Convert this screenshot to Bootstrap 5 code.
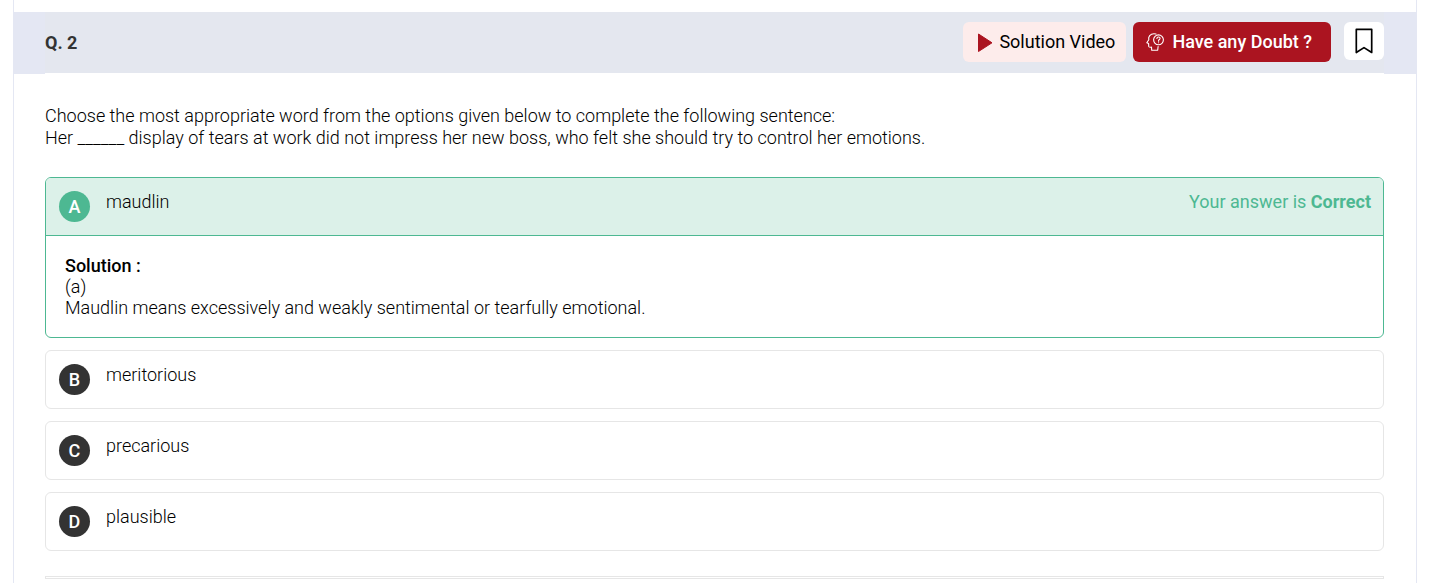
<!DOCTYPE html>
<html lang="en">
<head>
<meta charset="utf-8">
<meta name="viewport" content="width=device-width, initial-scale=1">
<title>Question 2</title>
<link href="https://cdn.jsdelivr.net/npm/bootstrap@5.3.0/dist/css/bootstrap.min.css" rel="stylesheet">
<style>
  body { font-family: Roboto, "Liberation Sans", sans-serif; font-size: 18px; font-weight: 300; line-height: 22px; color: #000; }
  .q-panel { margin: 0 30px 0 13px; border: solid #e4e7f3; border-width: 0 1px; padding-top: 12px; min-height: 100vh; }
  .q-band { background: #e4e7f3; padding: 0 32px 1px 31px; }
  .q-head { background: #e4e7ef; box-shadow: 0 1px #fff; height: 61px; }
  .q-title { font-size: 18px; line-height: 22px; font-weight: 700; color: #333; }
  .q-actions { gap: 7px; padding-top: 10px; }
  .q-body { padding: 31px 32px 0 31px; }
  .q-btn { height: 40px; border: 0; border-radius: 6px; font-size: 18px; line-height: 22px; font-weight: 400; padding: 0 11px 0 13px; white-space: nowrap; }
  .q-video, .q-video:hover { background: #fdeceb; color: #000; }
  .q-doubt, .q-doubt:hover { background: #ab1420; color: #fff; padding-right: 19px; font-weight: 500; }
  .q-save, .q-save:hover { background: #fff; width: 40px; height: 38px; padding: 0; margin-left: 6px; }
  .q-options { margin-top: 28px; gap: 12px; }
  .q-option { border: 1px solid #e6e6e6; border-radius: 6px; overflow: hidden; }
  .q-row { min-height: 57px; padding: 13px 12px 13px 13px; }
  .q-key { width: 31px; height: 31px; background: #333; color: #fff; font-weight: 500; }
  .q-right { border-color: #4db892; }
  .q-right .q-row { background: #dcf1e9; border-bottom: 1px solid #4db892; min-height: 58px; }
  .q-right .q-key { background: #4db892; }
  .q-verdict { color: #4db892; font-weight: 400; }
  .q-solution { padding: 19px; line-height: 21px; }
  .q-solution strong { font-weight: 500; }
  .q-rule { height: 3px; margin: 25px 0 0; border: 1px solid #e6e6e6; opacity: 1; }
</style>
</head>
<body>
<main class="q-panel">
  <header class="q-band">
    <div class="q-head d-flex align-items-center justify-content-between">
      <h1 class="q-title m-0">Q. 2</h1>
      <div class="q-actions d-flex align-items-start align-self-start">
        <button type="button" class="btn q-btn q-video d-flex align-items-center">
          <svg class="me-1" width="19" height="20" viewBox="0 0 19 20" aria-hidden="true"><path d="M2.500 2 L16 10.800 L2.500 19.500 Z" fill="#ab1420" stroke="#ab1420" stroke-linejoin="round"/></svg>
          Solution Video
        </button>
        <button type="button" class="btn q-btn q-doubt d-flex align-items-center gap-2">
          <svg width="18" height="18" viewBox="0 0 18 18" fill="none" stroke="#fff" stroke-width="1.100" stroke-linecap="round" stroke-linejoin="round" aria-hidden="true"><path d="M10 1 C7 .1 3.500 1.200 2.700 4.600 L2.800 6.700 L.8 9.700 L2.600 10.500 L2.700 13.500 Q2.900 14.500 5.500 14 L5.700 17.300 H11.700 L12.100 13.500"/><circle cx="12.500" cy="6.800" r="4.900"/><path d="M10.900 5.500 Q11 3.900 12.600 4 Q14.300 4.200 14 5.700 Q13.800 6.500 12.600 7.200 V8.200 M12.600 9.700 V9.800"/></svg>
          Have any Doubt ?
        </button>
        <button type="button" class="btn q-btn q-save d-flex align-items-center justify-content-center" aria-label="Bookmark">
          <svg width="18" height="26" viewBox="0 0 18 26" fill="none" stroke="#000" stroke-width="1.700" stroke-linejoin="round" aria-hidden="true"><path d="M1.300 1.300 H16.700 V24.500 L9 19.600 L1.300 24.500 Z"/></svg>
        </button>
      </div>
    </div>
  </header>
  <div class="q-body">
    <p class="m-0">Choose the most appropriate word from the options given below to complete the following sentence:<br>Her ______ display of tears at work did not impress her new boss, who felt she should try to control her emotions.</p>
    <div class="q-options d-flex flex-column">
      <section class="q-option q-right">
        <div class="q-row d-flex align-items-start">
          <span class="q-key rounded-circle d-flex align-items-center justify-content-center me-3">A</span>
          <span class="flex-grow-1">maudlin</span>
          <span class="q-verdict">Your answer is <strong>Correct</strong></span>
        </div>
        <div class="q-solution">
          <strong>Solution :</strong>
          <p class="m-0">(a)<br>Maudlin means excessively and weakly sentimental or tearfully emotional.</p>
        </div>
      </section>
      <section class="q-option"><div class="q-row d-flex align-items-start"><span class="q-key rounded-circle d-flex align-items-center justify-content-center me-3">B</span><span>meritorious</span></div></section>
      <section class="q-option"><div class="q-row d-flex align-items-start"><span class="q-key rounded-circle d-flex align-items-center justify-content-center me-3">C</span><span>precarious</span></div></section>
      <section class="q-option"><div class="q-row d-flex align-items-start"><span class="q-key rounded-circle d-flex align-items-center justify-content-center me-3">D</span><span>plausible</span></div></section>
    </div>
    <hr class="q-rule">
  </div>
</main>
<script src="https://cdn.jsdelivr.net/npm/bootstrap@5.3.0/dist/js/bootstrap.bundle.min.js"></script>
</body>
</html>
